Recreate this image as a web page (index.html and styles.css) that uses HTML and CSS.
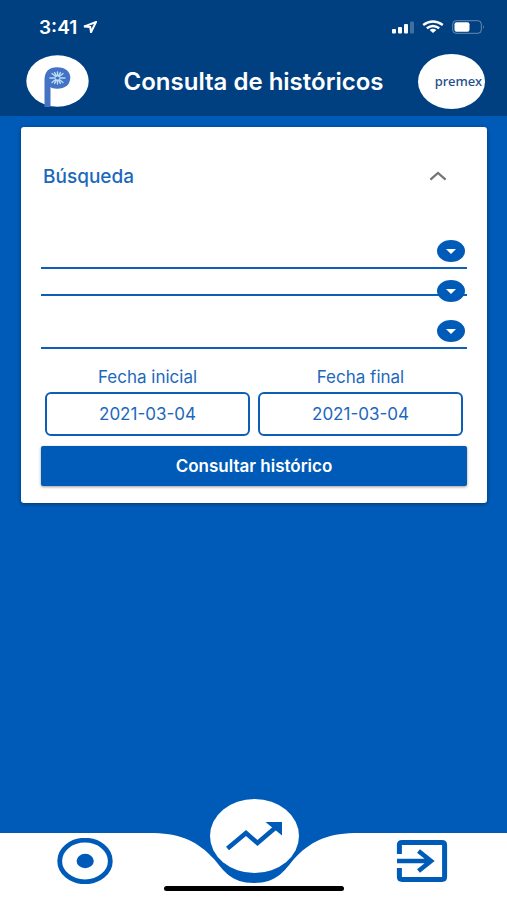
FILE: index.html
```html
<!DOCTYPE html>
<html lang="es">
  <head>
    <meta charset="UTF-8" />
    <meta name="viewport" content="width=device-width, initial-scale=1.0" />
    <title>Consulta de históricos</title>
    <link rel="stylesheet" href="styles.css">
  </head>
  <body>
    <header class="header">
      <div class="status-bar">
        <span class="clock">3:41</span>
        <svg class="location" width="14" height="12" viewBox="0 0 14 12">
          <path d="M1 5.6 L13 1 L8 11.2 L7.2 6 Z" />
        </svg>
        <div class="status-icons">
          <svg width="23" height="14" viewBox="0 0 23 14">
            <rect x="1" y="9" width="4" height="4.6" rx="1" fill="#fff" />
            <rect x="7" y="7" width="4" height="6.6" rx="1" fill="#fff" />
            <rect x="13" y="4" width="4" height="9.6" rx="1" fill="#fff" />
            <rect x="19" y="1.6" width="4" height="12" rx="1" fill="#fff" opacity="0.25" />
          </svg>
          <svg width="22" height="14" viewBox="0 0 22 14" fill="none" stroke="#fff" stroke-width="2.4">
            <path d="M1.2 5 Q11 -2 20.8 5" />
            <path d="M4.8 8.2 Q11 3.6 17.2 8.2" />
            <path d="M7.6 10 Q11 7.6 14.4 10 L11 13 Z" fill="#fff" stroke="none" />
          </svg>
          <svg width="33" height="14" viewBox="0 0 33 14">
            <rect x="0.7" y="0.7" width="28.6" height="12.6" rx="3.4" fill="none" stroke="#fff" stroke-opacity="0.4" />
            <rect x="2.5" y="2.3" width="15" height="9.4" rx="2" fill="#fff" />
            <path d="M31 5 Q32.6 7 31 9 Z" fill="#fff" opacity="0.5" />
          </svg>
        </div>
      </div>
      <div class="title-bar">
        <svg class="logo" width="63" height="53" viewBox="0 0 63 53">
          <ellipse cx="31.5" cy="26" rx="31.2" ry="25.8" fill="#fff" />
          <path d="M18.5 52 V24 Q19 12.5 31 12.2 Q44 12.6 44.3 23 Q43.6 33.4 31 33.8 Q26 33.6 24.5 32 V52 Z" fill="#4472c4" />
          <g stroke="#b9dcf5" stroke-width="1.4" stroke-linecap="round">
            <path d="M24 23 H39 M31.5 17 V29 M26 18.5 L37 27.5 M37 18.5 L26 27.5 M28.6 17.6 L34.4 28.4 M34.4 17.6 L28.6 28.4" />
          </g>
          <ellipse cx="31.5" cy="23" rx="2" ry="1.6" fill="#4472c4" />
        </svg>
        <h1>Consulta de históricos</h1>
        <div class="brand">premex</div>
      </div>
    </header>

    <main>
      <form class="card">
        <div class="card-header">
          <h2>Búsqueda</h2>
          <button type="button" class="toggle" aria-label="Contraer">
            <svg width="18" height="10" viewBox="0 0 18 10" fill="none" stroke="#757575" stroke-width="2.3">
              <path d="M1.4 8.6 L9 2 L16.6 8.6" />
            </svg>
          </button>
        </div>

        <div class="field">
          <select aria-label="Planta"><option></option></select>
          <span class="caret"></span>
        </div>
        <div class="field short">
          <select aria-label="Equipo"><option></option></select>
          <span class="caret"></span>
        </div>
        <div class="field tall">
          <select aria-label="Variable"><option></option></select>
          <span class="caret"></span>
        </div>

        <div class="dates">
          <div class="date">
            <label for="fechaInicial">Fecha inicial</label>
            <input type="text" id="fechaInicial" value="2021-03-04" />
          </div>
          <div class="date">
            <label for="fechaFinal">Fecha final</label>
            <input type="text" id="fechaFinal" value="2021-03-04" />
          </div>
        </div>

        <button type="submit" class="submit">Consultar histórico</button>
      </form>
    </main>

    <nav class="tabs">
      <button class="tab" aria-label="Monitoreo">
        <svg width="56" height="46" viewBox="0 0 56 46">
          <ellipse cx="28" cy="23" rx="25.3" ry="20.8" fill="none" stroke="#005bb8" stroke-width="4.8" />
          <ellipse cx="28.2" cy="23" rx="8.6" ry="7.2" fill="#005bb8" />
        </svg>
      </button>
      <div class="notch">
        <svg width="200" height="52" viewBox="0 0 200 52">
          <path d="M0 0 C29 1 44 9 60 26 C70 38 77 50 100 50 C123 50 130 38 140 26 C156 9 171 1 200 0 Z" fill="#005bb8" />
        </svg>
        <button class="tab-main" aria-label="Históricos">
          <svg width="58" height="32" viewBox="0 0 58 32">
            <path d="M2.5 28.5 L21 13 L32.5 23 L50 8" fill="none" stroke="#005bb8" stroke-width="4.6" />
            <path d="M40.5 2 H57 V15.5 Z" fill="#005bb8" />
          </svg>
        </button>
      </div>
      <button class="tab" aria-label="Salir">
        <svg width="52" height="42" viewBox="0 0 52 42" fill="none" stroke="#005bb8">
          <path d="M3.4 14 V5 Q3.4 2.6 6 2.6 H46 Q48.6 2.6 48.6 5 V37 Q48.6 39.4 46 39.4 H6 Q3.4 39.4 3.4 37 V28" stroke-width="5" />
          <path d="M1 21 H35 M22.5 11 L35 21 L22.5 31" stroke-width="4.6" />
        </svg>
      </button>
      <span class="home-indicator"></span>
    </nav>
  </body>
</html>
```

FILE: styles.css
```css
* {
  box-sizing: border-box;
}
body {
  margin: 0;
  min-height: 100vh;
  display: flex;
  flex-direction: column;
  background-color: #005bb8;
  font-family: Inter, "Liberation Sans", sans-serif;
  color: #1c68bd;
}
h1,
h2 {
  margin: 0;
}
button {
  font-family: inherit;
  border: none;
  padding: 0;
  background: none;
  cursor: pointer;
}
svg {
  display: block;
}

.header {
  background-color: #004080;
  color: white;
  padding: 16px 22px 0 26px;
}
.status-bar {
  display: flex;
  align-items: center;
  height: 22px;
  padding-left: 13px;
}
.clock {
  font-size: 19px;
  font-weight: 600;
}
.location {
  margin-left: 6px;
  fill: none;
  stroke: white;
  stroke-width: 2;
}
.status-icons {
  display: flex;
  gap: 8px;
  margin-left: auto;
}
.title-bar {
  display: flex;
  align-items: center;
  justify-content: space-between;
  height: 70px;
  margin-top: 8px;
}
.title-bar h1 {
  font-size: 24px;
  font-weight: 600;
  white-space: nowrap;
}
.brand {
  display: flex;
  align-items: center;
  justify-content: flex-end;
  width: 67px;
  height: 55px;
  padding-right: 3px;
  border-radius: 50%;
  background-color: white;
  color: #1f4f8f;
  font-family: "Noto Sans", sans-serif;
  font-size: 13px;
  font-weight: 500;
}

.card {
  margin: 11px 20px 0 21px;
  padding: 24px 20px 17px;
  background-color: white;
  border-radius: 3px;
  box-shadow: 0 1px 4px rgba(0, 0, 0, 0.4);
}
.card-header {
  display: flex;
  align-items: center;
  justify-content: space-between;
  height: 50px;
  padding: 0 20px 0 2px;
  margin-bottom: 30px;
}
.card-header h2 {
  font-size: 19px;
  font-weight: 500;
}

.field {
  position: relative;
  height: 38px;
}
.field.short {
  height: 27px;
}
.field.tall {
  height: 53px;
}
.field select {
  display: block;
  width: 100%;
  height: 100%;
  appearance: none;
  border: none;
  border-bottom: 2px solid #0d5fb5;
  border-radius: 0;
  background: none;
  color: inherit;
}
.caret {
  position: absolute;
  right: 2px;
  bottom: 7px;
  width: 28px;
  height: 22px;
  display: flex;
  align-items: center;
  justify-content: center;
  border-radius: 50%;
  background-color: #005bb8;
  pointer-events: none;
}
.caret::after {
  content: "";
  border: 5px solid transparent;
  border-top-color: white;
  border-bottom: none;
}
.short .caret {
  bottom: -6px;
}

.dates {
  display: grid;
  grid-template-columns: 1fr 1fr;
  gap: 8px;
  padding: 0 4px;
  margin-top: 18px;
}
.date {
  display: flex;
  flex-direction: column;
  gap: 5px;
}
.date label {
  font-size: 17px;
  line-height: 20px;
  text-align: center;
}
.date input {
  width: 100%;
  height: 44px;
  border: 2px solid #0d5fb5;
  border-radius: 6px;
  background: none;
  color: inherit;
  font-family: inherit;
  font-size: 17px;
  text-align: center;
}
.submit {
  display: block;
  width: 100%;
  height: 40px;
  margin-top: 10px;
  border-radius: 2px;
  background-color: #005bb8;
  color: white;
  font-size: 17px;
  font-weight: 600;
  box-shadow: 0 1px 3px rgba(0, 0, 0, 0.4);
}

.tabs {
  position: relative;
  display: flex;
  justify-content: space-between;
  height: 67px;
  margin-top: auto;
  padding: 0 57px;
  background-color: white;
}
.tab {
  display: flex;
  align-items: center;
  justify-content: center;
  width: 56px;
  height: 56px;
}
.notch {
  position: relative;
}
.tab-main {
  position: absolute;
  top: -34px;
  left: 56px;
  display: flex;
  align-items: center;
  justify-content: center;
  width: 89px;
  height: 74px;
  border-radius: 50%;
  background-color: white;
}
.home-indicator {
  position: absolute;
  bottom: 9px;
  left: 50%;
  width: 180px;
  height: 5px;
  margin-left: -90px;
  border-radius: 3px;
  background-color: black;
}
```
